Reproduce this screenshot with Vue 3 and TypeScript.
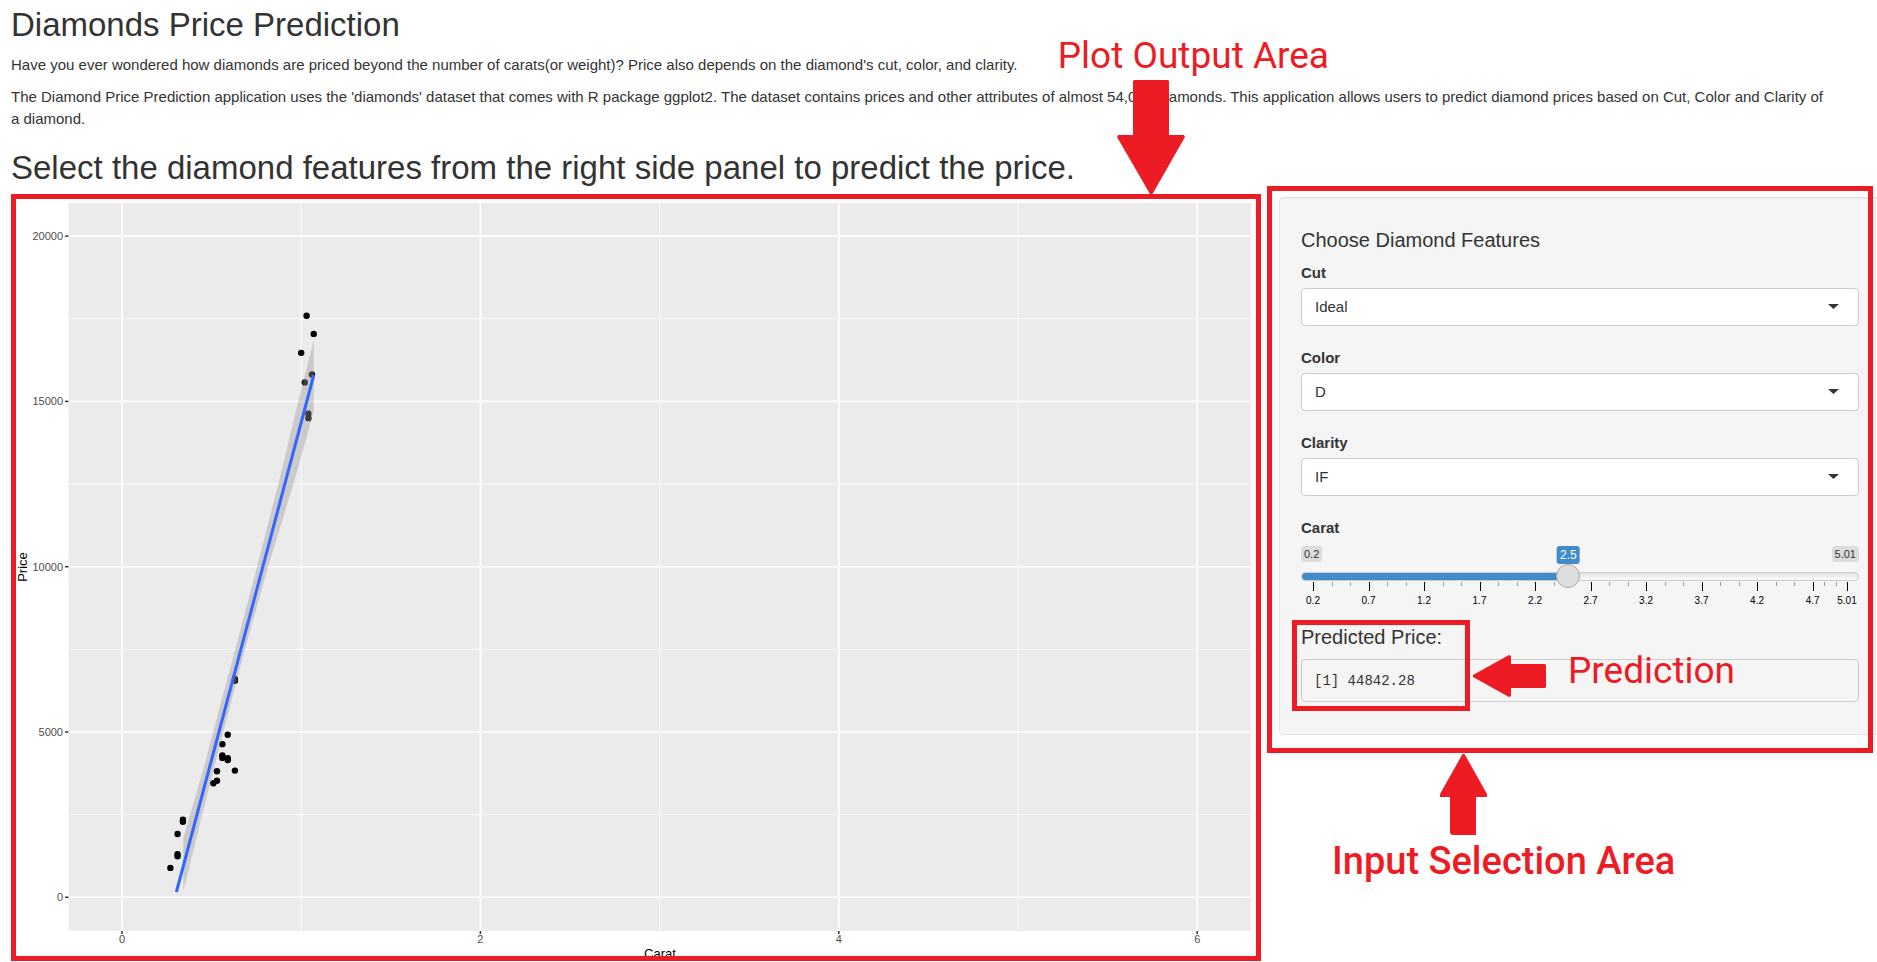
<script setup lang="ts">
import { computed, ref } from 'vue'

interface Point { x: number; y: number }
interface Feature { id: string; label: string; options: string[] }
interface Tick { value: number; left: number; major: boolean }

const features: Feature[] = [
  { id: 'cut', label: 'Cut', options: ['Ideal', 'Premium', 'Very Good', 'Good', 'Fair'] },
  { id: 'color', label: 'Color', options: ['D', 'E', 'F', 'G', 'H', 'I', 'J'] },
  { id: 'clarity', label: 'Clarity', options: ['IF', 'VVS1', 'VVS2', 'VS1', 'VS2', 'SI1', 'SI2', 'I1'] },
]
const selected = ref<Record<string, string>>({ cut: 'Ideal', color: 'D', clarity: 'IF' })

const minCarat = 0.2
const maxCarat = 5.01
const carat = ref(2.5)
const fraction = computed(() => (carat.value - minCarat) / (maxCarat - minCarat))

const majors = [0.2, 0.7, 1.2, 1.7, 2.2, 2.7, 3.2, 3.7, 4.2, 4.7, 5.01]
const place = (v: number) => ((v - minCarat) / (maxCarat - minCarat)) * 100
const ticks: Tick[] = majors.flatMap((value, i) => {
  const out: Tick[] = [{ value, left: place(value), major: true }]
  const next = majors[i + 1]
  if (next !== undefined) {
    for (const k of [1, 2]) {
      const v = value + ((next - value) * k) / 3
      out.push({ value: v, left: place(v), major: false })
    }
  }
  return out
})

// Chart scales: data units to drawing units
const sx = (carats: number) => 122 + carats * 179.2
const sy = (price: number) => 897.3 - price * 0.03306
const xMajor = [0, 2, 4, 6]
const xMinor = [1, 3, 5]
const yMajor = [0, 5000, 10000, 15000, 20000]
const yMinor = [2500, 7500, 12500, 17500]

const points: Point[] = [
  [1.03, 17590], [1.07, 17042], [1.0, 16469], [1.06, 15815], [1.02, 15575],
  [1.04, 14626], [1.04, 14494], [0.63, 6607], [0.63, 6549], [0.59, 4916],
  [0.56, 4632], [0.56, 4293], [0.56, 4216], [0.59, 4208], [0.59, 4150],
  [0.63, 3832], [0.53, 3812], [0.53, 3524], [0.51, 3448], [0.34, 2346],
  [0.34, 2287], [0.31, 1915], [0.31, 1307], [0.31, 1240], [0.27, 889],
].map(([x, y]) => ({ x: sx(x), y: sy(y) }))
</script>

<template>
  <main class="page">
    <h2>Diamonds Price Prediction</h2>
    <p>Have you ever wondered how diamonds are priced beyond the number of carats(or weight)? Price also depends on the diamond's cut, color, and clarity.</p>
    <p>The Diamond Price Prediction application uses the 'diamonds' dataset that comes with R package ggplot2. The dataset contains prices and other attributes of almost 54,000 diamonds. This application allows users to predict diamond prices based on Cut, Color and Clarity of a&nbsp;diamond.</p>
    <h2 class="lead">Select the diamond features from the right side panel to predict the price.</h2>

    <div class="row">
      <figure class="plot">
        <svg viewBox="16 199 1240 757" class="chart" role="img" aria-label="Price by carat">
          <rect x="68.5" y="203" width="1182.5" height="728" fill="#ebebeb" />
          <g stroke="#fff" stroke-width="0.8">
            <line v-for="v in xMinor" :key="'a' + v" :x1="sx(v)" :x2="sx(v)" y1="203" y2="931" />
            <line v-for="v in yMinor" :key="'b' + v" x1="68.5" x2="1251" :y1="sy(v)" :y2="sy(v)" />
          </g>
          <g stroke="#fff" stroke-width="1.6">
            <line v-for="v in xMajor" :key="'c' + v" :x1="sx(v)" :x2="sx(v)" y1="203" y2="931" />
            <line v-for="v in yMajor" :key="'d' + v" x1="68.5" x2="1251" :y1="sy(v)" :y2="sy(v)" />
          </g>
          <circle v-for="(p, i) in points" :key="'p' + i" :cx="p.x" :cy="p.y" r="3.2" fill="#000" />
          <path d="M313.8 340 L301.5 388 L279.3 480 L258 563 L236.5 645 L221 702 L206 760 L183.3 838 V891 L200 823 L216 760 L245 649 L268 567 L294.6 480 L313.8 411Z" fill="#999" fill-opacity="0.4" />
          <line x1="176.4" y1="892" x2="313.8" y2="375" stroke="#36f" stroke-width="3" />
          <g stroke="#333" stroke-width="1.5">
            <line v-for="v in yMajor" :key="'e' + v" x1="65" x2="68.5" :y1="sy(v)" :y2="sy(v)" />
            <line v-for="v in xMajor" :key="'f' + v" :x1="sx(v)" :x2="sx(v)" y1="931" y2="934" />
          </g>
          <g class="tick-text">
            <text v-for="v in yMajor" :key="'g' + v" x="63" :y="sy(v) + 4" text-anchor="end">{{ v }}</text>
            <text v-for="v in xMajor" :key="'h' + v" :x="sx(v)" y="943" text-anchor="middle">{{ v }}</text>
          </g>
          <g class="axis-text">
            <text x="660" y="958" text-anchor="middle">Carat</text>
            <text transform="translate(27 567) rotate(-90)" text-anchor="middle">Price</text>
          </g>
        </svg>
        <figcaption class="note note-plot">Plot Output Area</figcaption>
        <svg class="arrow arrow-plot" width="68" height="115" viewBox="0 0 68 115" aria-hidden="true">
          <path d="M17 0H51L52 1V55H67L68 57L35.500 114H33L0 57L1 55H16V1Z" />
        </svg>
      </figure>

      <form class="panel" @submit.prevent>
        <h4>Choose Diamond Features</h4>
        <div v-for="f in features" :key="f.id" class="field">
          <label :for="f.id">{{ f.label }}</label>
          <div class="select-box">
            <select :id="f.id" v-model="selected[f.id]">
              <option v-for="o in f.options" :key="o" :value="o">{{ o }}</option>
            </select>
            <svg class="caret" width="11" height="5" viewBox="0 0 11 5" aria-hidden="true"><path d="M0 0H11L5.500 5Z" /></svg>
          </div>
        </div>

        <label for="carat">Carat</label>
        <div class="slider" :style="{ '--f': fraction }">
          <div class="chips">
            <span class="chip">{{ minCarat }}</span>
            <span class="chip">{{ maxCarat }}</span>
            <output for="carat" class="current">{{ carat }}</output>
          </div>
          <input id="carat" v-model.number="carat" type="range" :min="minCarat" :max="maxCarat" step="0.01" />
          <div class="scale">
            <template v-for="(t, i) in ticks" :key="i">
              <i :class="['tick', { major: t.major }]" :style="{ left: t.left + '%' }"></i>
              <span v-if="t.major" class="tick-label" :style="{ left: t.left + '%' }">{{ t.value }}</span>
            </template>
          </div>
        </div>

        <div class="result">
          <h4>Predicted Price:</h4>
          <pre>[1] 44842.28</pre>
          <svg class="arrow arrow-result" width="73" height="42" viewBox="0 0 73 42" aria-hidden="true">
            <path d="M0 20L36 0L38 1V9H72L73 10V32L72 33H38V41L36 42L0 22Z" />
          </svg>
          <span class="note note-result">Prediction</span>
        </div>

        <svg class="arrow arrow-input" width="47" height="81" viewBox="0 0 47 81" aria-hidden="true">
          <path d="M22.500 0H24.500L47 40V43H36V81H12L10 79V43H0V40Z" />
        </svg>
        <span class="note note-input">Input Selection Area</span>
      </form>
    </div>
  </main>
</template>

<style>
body {
  margin: 0;
  background: #fff;
}
</style>

<style scoped>
.page {
  box-sizing: border-box;
  padding: 7px 0 1px 11px;
  overflow: clip;
  font-family: "Liberation Sans", Arial, Helvetica, sans-serif;
  font-size: 15px;
  line-height: 22px;
  color: #333;
}
h2 {
  margin: 0 0 11px;
  font-size: 33px;
  line-height: 36px;
  font-weight: 400;
}
p {
  margin: 0 5px 10px 0;
}
.lead {
  margin: 20px 0 8px;
}
.row {
  display: grid;
  grid-template-columns: 1250fr 602fr;
  column-gap: 18px;
  align-items: start;
  margin-right: -4px;
}
.plot {
  position: relative;
  margin: 0;
  border: 5px solid #ed1c24;
}
.chart {
  display: block;
  width: 100%;
  height: auto;
}
.tick-text {
  font-size: 11px;
  fill: #4d4d4d;
}
.axis-text {
  font-size: 13px;
  fill: #000;
}
.note {
  position: absolute;
  font-family: Roboto, sans-serif;
  font-size: 37px;
  line-height: 42px;
  color: #ed1c24;
  white-space: nowrap;
}
.arrow {
  position: absolute;
  fill: #ed1c24;
}
.note-plot {
  top: -164px;
  right: -73px;
}
.arrow-plot {
  top: -119px;
  right: 71px;
}
.panel {
  position: relative;
  margin-top: 3px;
  padding: 21px;
  background: #f5f5f5;
  border: 1px solid #e3e3e3;
  border-radius: 4px;
  box-shadow: inset 0 1px 1px rgba(0, 0, 0, 0.05);
}
.panel::before {
  content: "";
  position: absolute;
  inset: -12px 7px -19px -13px;
  border: 5px solid #ed1c24;
  pointer-events: none;
}
h4 {
  margin: 10px 0 11px;
  font-size: 20px;
  line-height: 22px;
  font-weight: 400;
}
label {
  display: block;
  font-weight: 700;
}
.field {
  margin-bottom: 21px;
}
.select-box {
  position: relative;
  margin-top: 4px;
}
select {
  display: block;
  box-sizing: border-box;
  width: 100%;
  height: 38px;
  padding: 0 13px 1px;
  appearance: none;
  border: 1px solid #ccc;
  border-radius: 4px;
  background: #fff;
  color: #333;
  font: inherit;
}
.caret {
  position: absolute;
  top: 16px;
  right: 20px;
  fill: #333;
  pointer-events: none;
}
.slider {
  margin-top: 7px;
}
.chips {
  position: relative;
  display: flex;
  justify-content: space-between;
  height: 18px;
}
.chip {
  height: 16px;
  padding: 0 3px;
  border-radius: 3px;
  background: #dcdcdc;
  font-size: 11px;
  line-height: 16px;
}
.current {
  position: absolute;
  left: calc(12px + (100% - 24px) * var(--f));
  padding: 0 3px;
  transform: translateX(-50%);
  border-radius: 3px;
  background: #428bca;
  color: #fff;
  font-size: 12px;
  line-height: 18px;
}
input[type="range"] {
  position: relative;
  z-index: 1;
  display: block;
  width: 100%;
  height: 24px;
  margin: 0;
  appearance: none;
  background: transparent;
}
input[type="range"]::-webkit-slider-runnable-track {
  box-sizing: border-box;
  height: 9px;
  border: 1px solid #ccc;
  border-radius: 5px;
  background:
    linear-gradient(#428bca, #428bca) border-box 0 0 / calc(12px + (100% - 24px) * var(--f)) 100% no-repeat,
    linear-gradient(#dedede, #fff) border-box;
}
input[type="range"]::-webkit-slider-thumb {
  box-sizing: border-box;
  width: 24px;
  height: 24px;
  margin-top: -9px;
  appearance: none;
  border: 1px solid #aaa;
  border-radius: 50%;
  background: #dedede;
}
.scale {
  position: relative;
  height: 27px;
  margin: -6px 12px 0;
}
.tick {
  position: absolute;
  width: 1px;
  height: 4px;
  background: #999;
}
.tick.major {
  height: 9px;
  background: #000;
}
.tick-label {
  position: absolute;
  top: 13px;
  transform: translateX(-50%);
  color: #000;
  font-size: 10px;
  line-height: 12px;
}
.result {
  position: relative;
  margin-top: 17px;
}
.result::before {
  content: "";
  position: absolute;
  top: -6px;
  left: -9px;
  width: 168px;
  height: 81px;
  border: 5px solid #ed1c24;
  pointer-events: none;
}
pre {
  margin: 0 0 11px;
  padding: 11px 12px 9px;
  border: 1px solid #ccc;
  border-radius: 4px;
  font-family: "Liberation Mono", monospace;
  font-size: 14px;
  line-height: 21px;
}
.arrow-result {
  top: 29px;
  left: 172px;
}
.note-result {
  top: 24px;
  left: 267px;
}
.arrow-input {
  bottom: -101px;
  left: 160px;
}
.note-input {
  bottom: -148px;
  left: 52px;
  font-size: 38px;
  font-weight: 500;
}
</style>
